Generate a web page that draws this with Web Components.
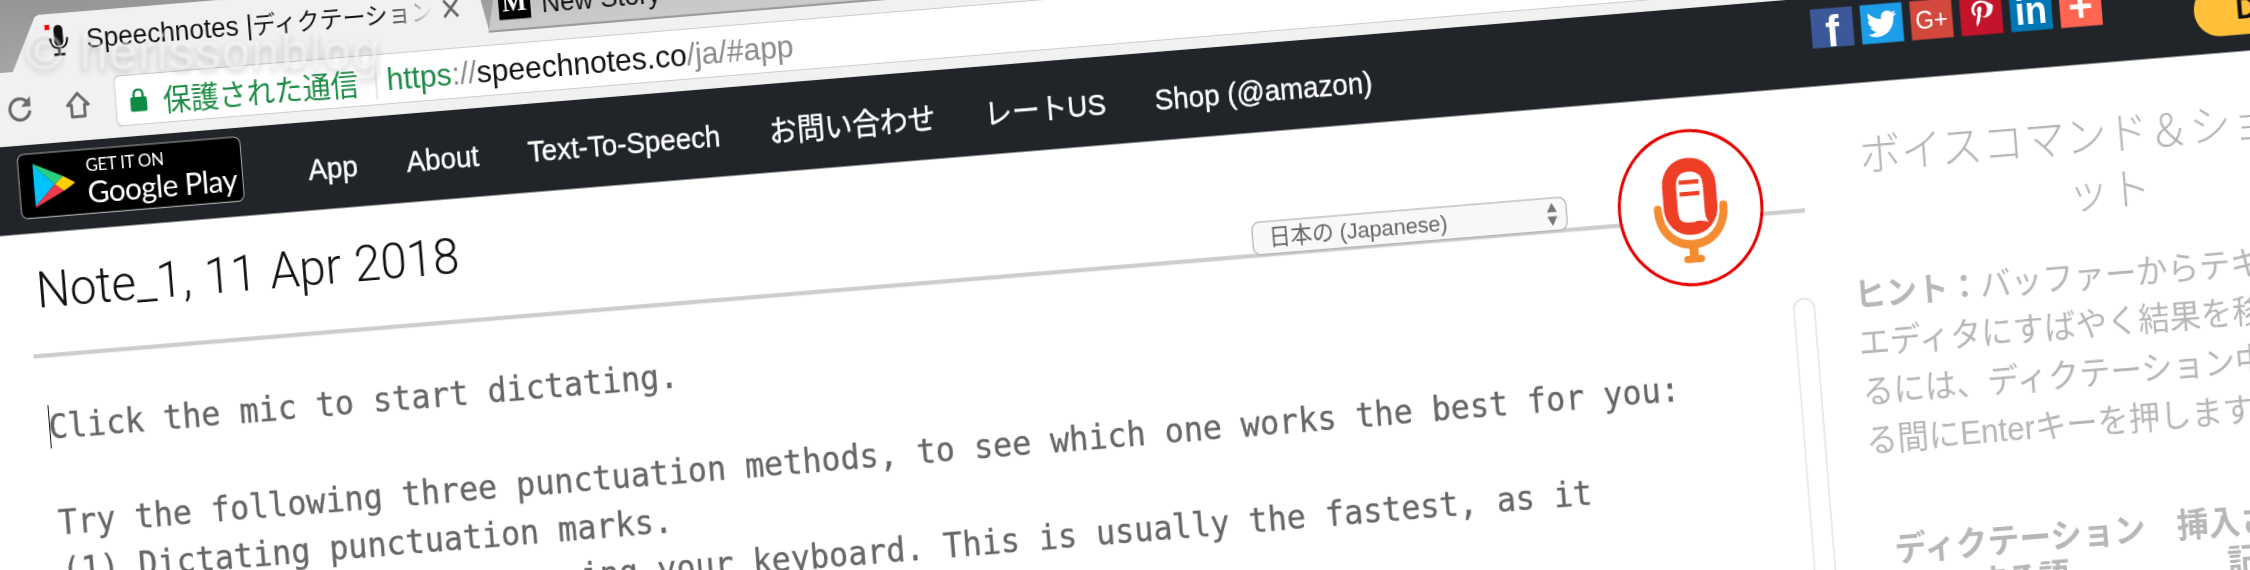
<!DOCTYPE html>
<html lang="ja"><head><meta charset="utf-8"><title>Speechnotes</title>
<style>html,body{margin:0;padding:0;background:#fff}</style></head>
<body>
<shot-stage>
  <tilted-sheet>
    <browser-tabs></browser-tabs>
    <browser-toolbar></browser-toolbar>
    <site-nav></site-nav>
    <page-main>
      <note-pane></note-pane>
      <voice-sidebar></voice-sidebar>
    </page-main>
  </tilted-sheet>
  <page-watermark></page-watermark>
</shot-stage>
<script>
const SANS='"Liberation Sans","Noto Sans CJK JP",sans-serif';
const JP='"Noto Sans CJK JP","Liberation Sans",sans-serif';
function def(name,css,html){
  customElements.define(name,class extends HTMLElement{
    constructor(){super();const r=this.attachShadow({mode:'open'});r.innerHTML='<style>'+css+'</style>'+html;}
  });
}
def('shot-stage',`:host{display:block;position:relative;width:2250px;height:570px;overflow:hidden;background:#fff}`,`<slot></slot>`);
def('tilted-sheet',`:host{display:block;width:2460px;height:780px;transform-origin:0 0;
  transform:matrix3d(.99344,-.08196,0,0, .08424,1.05305,0,0, 0,0,1,0, -101.03,-12.87,0,1)}`,`<slot></slot>`);
def('page-watermark',`:host{display:block;position:absolute;left:26px;top:24px;font:50px/56px ${SANS};letter-spacing:1.5px;
  color:rgba(255,255,255,.58);text-shadow:0 3px 7px rgba(0,0,0,.24);filter:blur(.8px);white-space:pre}`,`© herissonblog`);

def('browser-tabs',`:host{display:flex;align-items:flex-end;height:89px;padding-left:107px;background:linear-gradient(#8f8f8f,#a6a6a6);box-sizing:border-box;font-family:${SANS};color:#111}
.tab{height:52px;box-sizing:border-box;display:flex;align-items:center}
.on{width:480px;background:#f1f1f1;clip-path:polygon(0 100%,26px 2px,30px 0,calc(100% - 14px) 0,calc(100% - 10px) 2px,100% 100%)}
.off{width:430px;margin-left:-1px;background:linear-gradient(#bdbdbd,#cbcbcb);border-bottom:2px solid #9a9a9a;clip-path:polygon(0 100%,12px 0,calc(100% - 12px) 0,100% 100%)}
.fav{margin-left:35px;flex:none}
.t{margin-left:15px;width:349px;overflow:hidden;white-space:nowrap;font-size:26.3px;line-height:40px;padding-bottom:2px;
  -webkit-mask-image:linear-gradient(to right,#000 86%,transparent 100%);mask-image:linear-gradient(to right,#000 86%,transparent 100%)}
.t span{font-size:23px;font-family:${JP}}
.x{margin-left:10px;flex:none}
.m{margin-left:12px;width:32px;height:32px;background:#000;color:#fff;font:bold 26px/32px "Liberation Serif",serif;text-align:center;flex:none}
.n{margin-left:11px;font-size:26px;white-space:nowrap;padding-top:6px}`,
`<div class="tab on">
 <svg class="fav" width="26" height="32" viewBox="0 0 26 32"><rect x="0" y="0" width="5" height="5" fill="#f00"/><rect x="9" y="1" width="9" height="20" rx="4.5" fill="#111"/><path d="M5 13c0 7 4 10 8.500 10S22 20 22 13" fill="none" stroke="#111" stroke-width="2"/><path d="M13.500 23v5M8 29h11" stroke="#111" stroke-width="2.500"/></svg>
 <div class="t">Speechnotes |<span>ディクテーション</span></div>
 <svg class="x" width="16" height="18" viewBox="0 0 16 18"><path d="M1 1l14 16M15 1L1 17" stroke="#666" stroke-width="2.600" fill="none"/></svg>
</div>
<div class="tab off"><div class="m">M</div><div class="n">New Story</div></div>`);

def('browser-toolbar',`:host{display:flex;align-items:center;height:70px;box-sizing:border-box;padding:1px 0 0 98px;background:#f1f1f1;font-family:${SANS}}
svg{flex:none}.home{margin-left:31px}
.box{margin-left:25px;flex:1;height:49px;box-sizing:border-box;border:1.5px solid #bdbdbd;border-right:0;border-radius:6px 0 0 6px;background:#fff;display:flex;align-items:center;white-space:nowrap}
.lock{margin-left:14px}
.sec{margin-left:16px;font:28.100px/40px ${JP};color:#1d8b45}
.sep{margin-left:17px;width:1.500px;height:36px;background:#cfcfcf}
.url{margin-left:10px;font-size:30.200px;color:#111}
.g{color:#1d8b45}.q{color:#8a8a8a}`,
`<svg width="28" height="28" viewBox="0 0 28 28"><path d="M23 15.500A10 10 0 1 1 20 6.500" fill="none" stroke="#6a6a6a" stroke-width="3"/><path d="M24 2v9.500h-9.500z" fill="#6a6a6a"/></svg>
<svg class="home" width="25" height="26" viewBox="0 0 25 26"><path d="M12.500 2L2 13h4v11h13V13h4z" fill="none" stroke="#6a6a6a" stroke-width="2.800" stroke-linejoin="round"/></svg>
<div class="box">
 <svg class="lock" width="17" height="22" viewBox="0 0 17 22"><rect x="0" y="8" width="17" height="14" rx="2" fill="#0f8a43"/><path d="M4 9V5.500a4.500 4.500 0 0 1 9 0V9" fill="none" stroke="#0f8a43" stroke-width="2.400"/></svg>
 <span class="sec">保護された通信</span><span class="sep"></span>
 <span class="url"><span class="g">https</span><span class="q">://</span>speechnotes.co<span class="q">/ja/#app</span></span>
</div>`);

def('play-badge',`:host{display:flex;align-items:center;box-sizing:border-box;width:225px;height:62px;margin:8px 0 0 -1.500px;background:#000;border:1.5px solid #a6a6a6;border-radius:7px;color:#fff;font-family:Lato,${SANS};flex:none}
svg{margin-left:14px;flex:none}
.w{margin-left:11px;display:flex;flex-direction:column;white-space:nowrap}
.a{font-size:17px;line-height:18px;letter-spacing:-.3px}
.b{font-size:30px;line-height:32px;letter-spacing:-.6px}`,
`<svg width="42" height="42" viewBox="0 0 42 42"><path d="M0 1v40l21-20z" fill="#00c4ff"/><path d="M0 1c0-1 1-1 2 0l28 13-9 7z" fill="#29d07e"/><path d="M30 14l10 6c2 1 2 1 0 2l-10 6-9-7z" fill="#ffce00"/><path d="M0 41c0 1 1 1 2 0l28-13-9-7z" fill="#ee3b4b"/></svg>
<div class="w"><span class="a">GET IT ON</span><span class="b">Google Play</span></div>`);

def('site-nav',`:host{display:flex;align-items:flex-start;height:84px;box-sizing:border-box;padding:0 17px 0 105.700px;background:#212529;color:#fff;font-family:${SANS};white-space:nowrap}
.links{display:flex;gap:49.200px;margin-left:65.500px;padding-top:30px;font-size:27.900px;line-height:32px;-webkit-text-stroke:.35px #fff}
.soc{display:flex;gap:8px;margin-left:auto;margin-right:92px;padding-top:11px}
.i{width:42px;height:37px;display:flex;align-items:center;justify-content:center;color:#fff;overflow:hidden;font-family:${SANS}}
.f{background:#3b5998;font-size:42px;font-weight:bold;line-height:37px;padding-top:6px;box-sizing:border-box}
.tw{background:#1c9de8}
.g{background:#d3483c;font-size:24px;line-height:37px}
.pi{background:#c4142b}
.l{background:#0077b5;font-size:36px;font-weight:bold;line-height:37px}
.pl{background:#ff6550;font-size:42px;font-weight:bold;line-height:37px}
.d{width:150px;height:50px;margin-top:18px;box-sizing:border-box;padding:3px 0 0 42px;border-radius:25px 0 0 25px;background:#ffc03a;color:#111;font:bold 29px/44px ${SANS}}`,
`<play-badge></play-badge>
<div class="links"><span>App</span><span>About</span><span>Text-To-Speech</span><span>お問い合わせ</span><span>レートUS</span><span>Shop (@amazon)</span></div>
<div class="soc">
 <div class="i f">f</div>
 <div class="i tw"><svg width="32" height="30" viewBox="0 0 24 24"><path fill="#fff" d="M23.953 4.57a10 10 0 01-2.825.775 4.958 4.958 0 002.163-2.723c-.951.555-2.005.959-3.127 1.184a4.92 4.92 0 00-8.384 4.482C7.69 8.095 4.067 6.13 1.64 3.162a4.822 4.822 0 00-.666 2.475c0 1.71.87 3.213 2.188 4.096a4.904 4.904 0 01-2.228-.616v.06a4.923 4.923 0 003.946 4.827 4.996 4.996 0 01-2.212.085 4.936 4.936 0 004.604 3.417 9.867 9.867 0 01-6.102 2.105c-.39 0-.779-.023-1.17-.067a13.995 13.995 0 007.557 2.209c9.053 0 13.998-7.496 13.998-13.985 0-.21 0-.42-.015-.63A9.935 9.935 0 0024 4.59z"/></svg></div>
 <div class="i g">G+</div>
 <div class="i pi"><svg width="30" height="33" viewBox="0 0 24 24"><path fill="#fff" d="M12 1C7 1 4.500 4.500 4.500 7.800c0 2 .8 3.800 2.400 4.400.3.1.5 0 .6-.3l.2-.9c.1-.3 0-.4-.2-.7-.5-.5-.8-1.200-.8-2.200 0-2.900 2.200-5.500 5.600-5.500 3.100 0 4.800 1.900 4.800 4.400 0 3.300-1.500 6.100-3.600 6.100-1.200 0-2-1-1.800-2.200.3-1.400 1-3 1-4 0-.9-.5-1.700-1.500-1.700-1.200 0-2.200 1.200-2.200 2.900 0 1 .4 1.800.4 1.800l-1.400 6.100c-.4 1.800-.1 4 0 4.200 0 .1.2.2.3.1.1-.2 1.900-2.300 2.500-4.400l.9-3.700c.5.9 1.800 1.700 3.200 1.700 4.200 0 7-3.800 7-8.900C20.100 4.200 16.800 1 12 1z"/></svg></div>
 <div class="i l">in</div>
 <div class="i pl">+</div>
</div>
<div class="d">Donate</div>`);

def('page-main',`:host{display:flex;align-items:flex-start;padding-left:105px;background:#fff}`,`<slot></slot>`);

def('mic-button',`:host{display:block;box-sizing:border-box;width:146px;height:148.500px;border:3.500px solid #e60000;border-radius:50%;background:#fff;flex:none;margin-bottom:-64.500px}
svg{display:block;width:100%;height:100%}`,
`<svg viewBox="-70 -70 140 140">
 <path d="M-33 0C-33 24-16 35 0 35S33 24 33 0" fill="none" stroke="#f48c32" stroke-width="8" stroke-linecap="round"/>
 <path d="M0 35v13" stroke="#f48c32" stroke-width="9"/><path d="M-7 49h14" stroke="#f48c32" stroke-width="7" stroke-linecap="round"/>
 <rect x="-27" y="-47" width="54" height="73" rx="26" fill="#ee3e26"/>
 <path d="M-13-20Q-13-34 0-34Q14-34 14-20L14 6Q14 11 17 15Q8 12 3 14L-4 14Q-13 14-13 4Z" fill="#fff"/>
 <path d="M-10-24H10M-10-13H10" stroke="#ee3e26" stroke-width="4"/>
</svg>`);

def('note-pane',`:host{display:block;width:1786px;flex:none}
.head{display:flex;align-items:flex-end;width:1783px;height:118px;box-sizing:border-box;border-bottom:4px solid #cdcdcd;padding-right:41px}
h1{margin:0 0 30px 8px;font:300 47.500px/60px Roboto,${SANS};word-spacing:1.500px;color:#111;white-space:nowrap}
.sel{margin:0 51px -2px auto;width:317px;height:32px;box-sizing:border-box;border:1.500px solid #a3a3a3;border-radius:8px;background:#f8f8f8;color:#666;display:flex;align-items:center;padding-left:16px;font:21.700px/28px ${SANS}}
.sel svg{margin-left:auto;margin-right:8px}
.ed{display:flex}
pre{flex:1;margin:44px 0 0 11.500px;font:31.900px/45.400px "DejaVu Sans Mono",monospace;color:#666;white-space:pre;-webkit-text-stroke:.3px #666}
.caret{display:inline-block;width:1.500px;height:41px;background:#111;vertical-align:-9px;margin:0 -1.500px 0 -2px}
.rail{flex:none;width:23px;height:300px;margin-top:80px;box-sizing:border-box;border:2px solid #e6e6e6;border-bottom:0;border-radius:12px 12px 0 0}`,
`<div class="head"><h1>Note_1, 11 Apr 2018</h1>
 <div class="sel">日本の (Japanese)<svg width="12" height="24" viewBox="0 0 12 24"><path d="M6 1l5 9H1zM6 23l5-9H1z" fill="#777"/></svg></div>
 <mic-button></mic-button></div>
<div class="ed"><pre><span class="caret"></span>Click the mic to start dictating.

Try the following three punctuation methods, to see which one works the best for you:
(1) Dictating punctuation marks.
                           ing your keyboard. This is usually the fastest, as it</pre><div class="rail"></div></div>`);

def('voice-sidebar',`:host{display:block;margin-left:40px;font-family:${JP};color:#b7b7b7;width:520px;flex:none;white-space:nowrap}
h2{margin:38.500px 0 0 16px;width:494px;font:300 41.700px/53px ${JP};color:#b5b5b5}
h2 div:last-child{text-align:center}
.p{margin-top:29.500px;font-size:31.500px;line-height:46px}
.p i{font:31.500px/46px ${SANS}}
b{font-weight:700}
.t{display:grid;grid-template-columns:257px 160px;column-gap:29px;margin:60px 0 0 17.500px;font:700 31.900px/38px ${JP};text-align:center;white-space:normal}`,
`<h2><div>ボイスコマンド＆ショートカ</div><div>ット</div></h2>
<div class="p"><div><b>ヒント：</b>バッファーからテキ</div><div>エディタにすばやく結果を移</div><div>るには、ディクテーション中</div><div>る間に<i>Enter</i>キーを押します</div></div>
<div class="t"><div>ディクテーションする語</div><div>挿入される記号</div></div>`);
</script>
</body></html>
